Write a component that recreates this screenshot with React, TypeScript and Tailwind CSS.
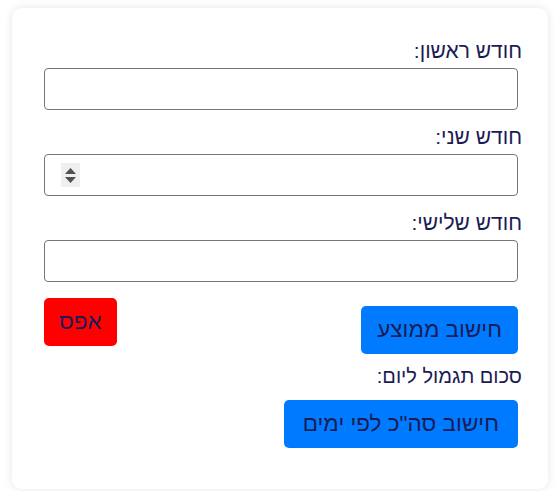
import React from 'react';

const textColor = 'text-[#1b1b55]';

function Field({ label, spinner }: { label: string; spinner?: boolean }) {
  return (
    <div className="mb-[13px]">
      <label className={`block mb-[4px] -mr-[4px] text-[21px] leading-[27px] ${textColor}`}>{label}</label>
      <div className="relative">
        <input
          type="text"
          className="block w-full h-[42px] rounded-[4px] border border-[#767676] bg-white px-2 outline-none"
        />
        {spinner && (
          <div className="absolute left-[17px] top-[9px] w-[19px] h-[24px] bg-[#efefef] flex flex-col items-center justify-center gap-[3px]">
            <svg width="11" height="6" viewBox="0 0 11 6">
              <path d="M0 6 L5.5 0 L11 6 Z" fill="#505050" />
            </svg>
            <svg width="11" height="6" viewBox="0 0 11 6">
              <path d="M0 0 L5.5 6 L11 0 Z" fill="#505050" />
            </svg>
          </div>
        )}
      </div>
    </div>
  );
}

export default function App() {
  return (
    <div className="min-h-screen bg-white pt-[8px] pl-[12px]" style={{ fontFamily: '"Liberation Sans", Arial, sans-serif' }}>
      <div
        dir="rtl"
        className="w-[536px] rounded-[10px] bg-white shadow-[0_0_10px_rgba(0,0,0,0.1)] pt-[29px] pb-[41px] pr-[30px] pl-[32px]"
      >
        <Field label="חודש ראשון:" />
        <Field label="חודש שני:" spinner />
        <Field label="חודש שלישי:" />

        <div className="flex justify-between items-start pt-[3px]">
          <button className={`mt-[8px] h-[48px] px-[16px] rounded-[5px] bg-[#007bff] text-[22.5px] ${textColor}`}>
            חישוב ממוצע
          </button>
          <button className={`h-[48px] px-[15px] rounded-[5px] bg-[#ff0000] text-[22.5px] ${textColor}`}>
            אפס
          </button>
        </div>

        <div className={`mt-[9px] -mr-[4px] text-[20px] leading-[27px] ${textColor}`}>סכום תגמול ליום:</div>

        <div className="mt-[10px]">
          <button className={`h-[48px] px-[19px] rounded-[5px] bg-[#007bff] text-[22.5px] ${textColor}`}>
            חישוב סה"כ לפי ימים
          </button>
        </div>
      </div>
    </div>
  );
}
